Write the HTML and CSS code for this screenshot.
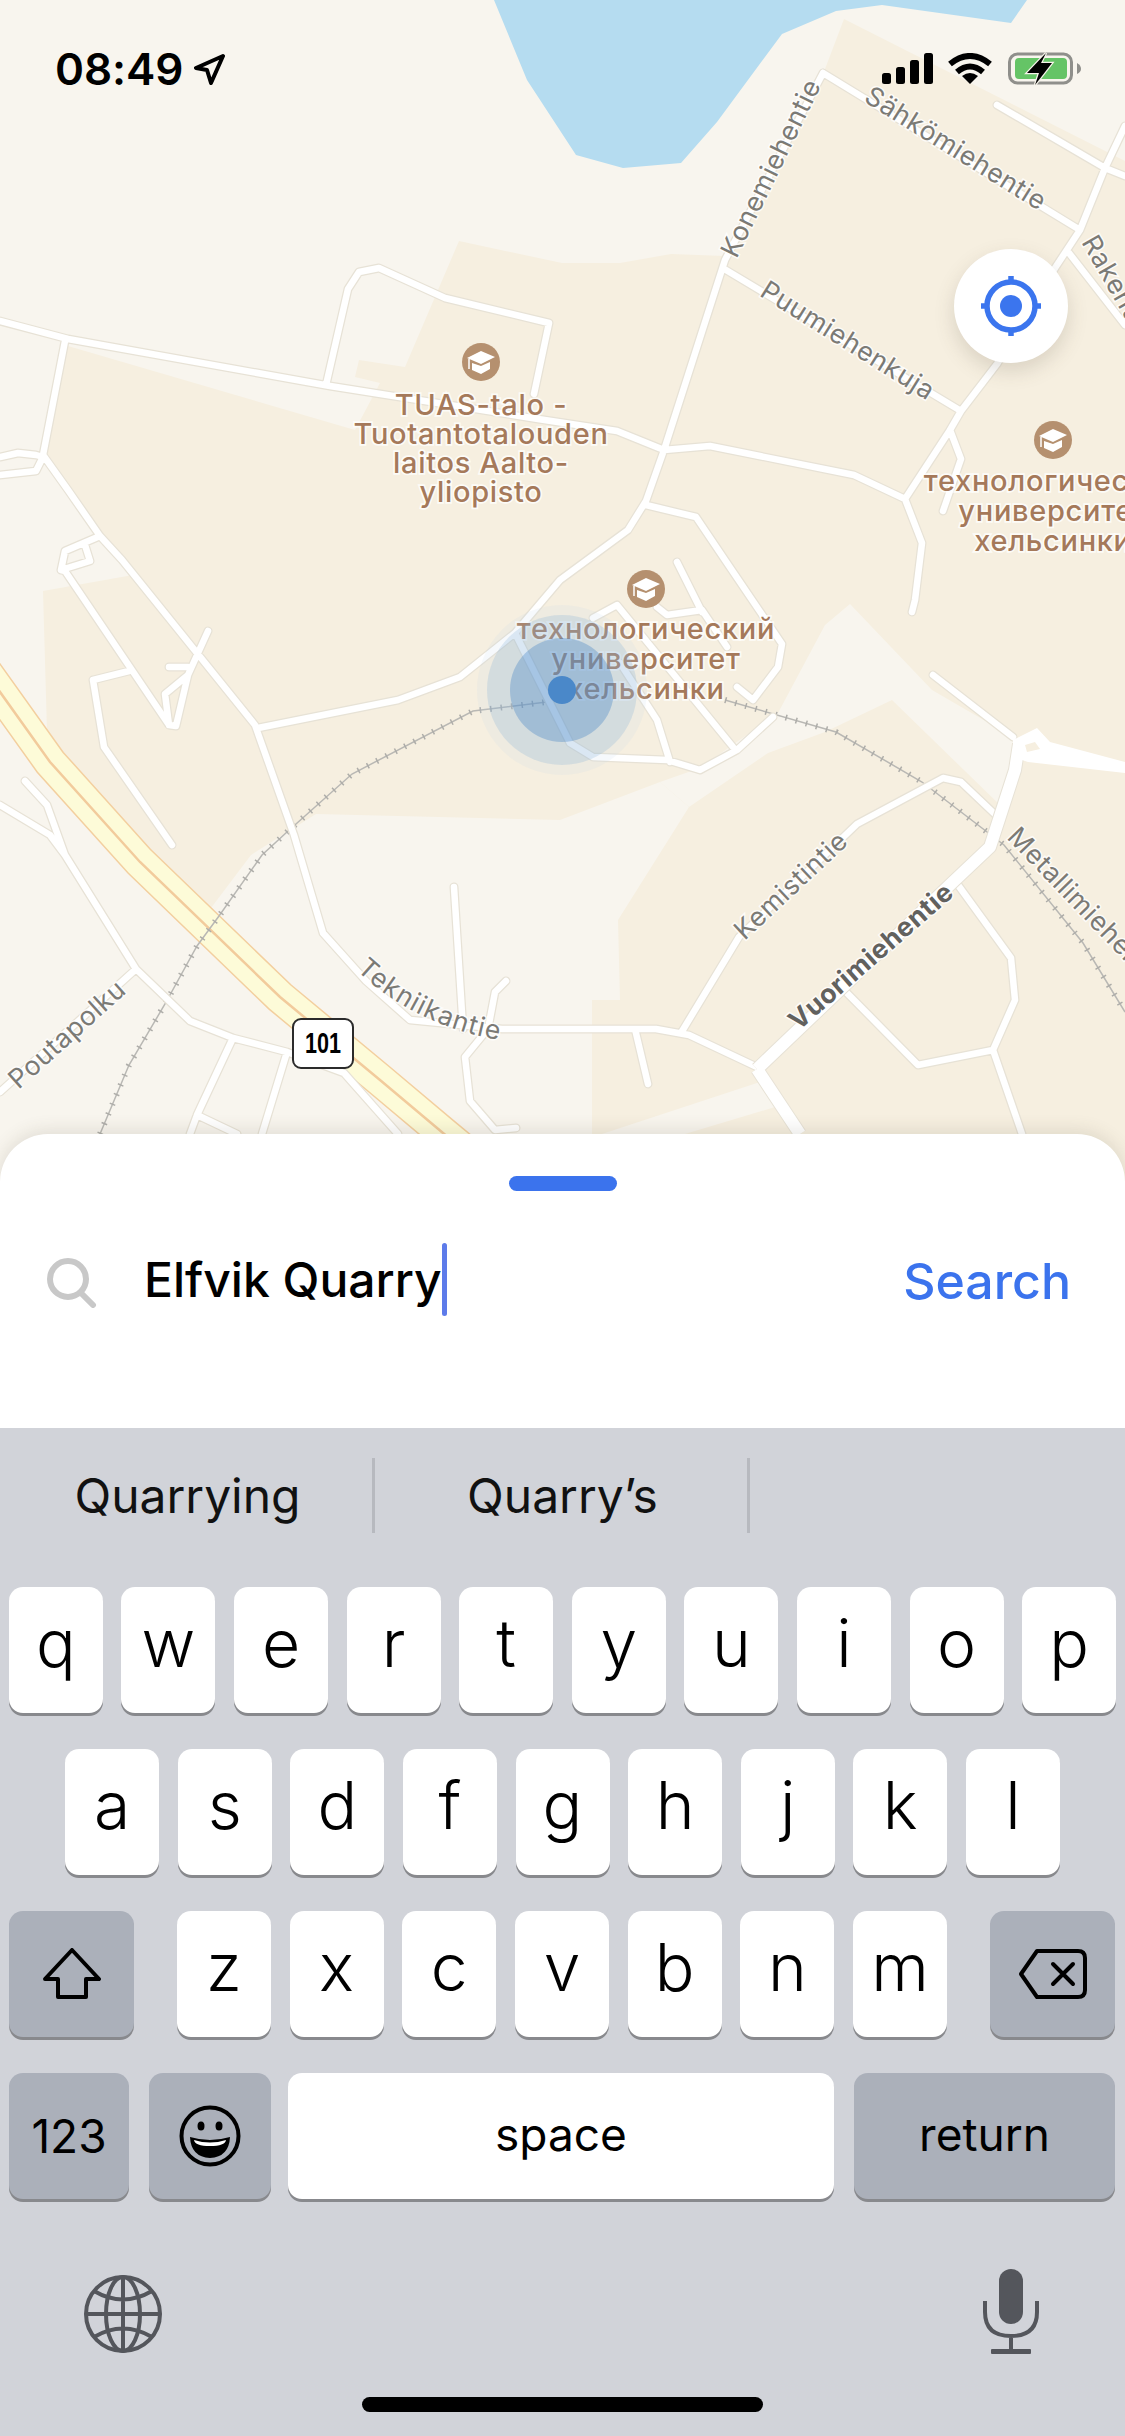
FILE: index.html
```html
<!DOCTYPE html>
<html lang="en">
<head>
<meta charset="utf-8">
<title>Map search</title>
<link rel="stylesheet" href="styles.css">
</head>
<body>
<div class="screen">
  <section class="map">
    <svg class="map-canvas" viewBox="0 0 1125 1182" width="1125" height="1182" aria-hidden="false">
      <defs>
        <path id="roads" d="M0 321L68 339L330 386L538 419L617 431L664 450
          M823 73L725 260L664 450L646 501L628 530L560 580L515 633L460 677L398 700L258 728
          M823 73L1080 230
          M997 105L1105 168L1125 176
          M1125 126L1105 168L1080 230L1055 268L997 364L961 411L950 430L905 499
          M726 270L961 411
          M664 450L710 446L854 475L905 499L922 543L915 600L912 612
          M950 430L961 459L943 511
          M1069 253L1125 325
          M646 505L696 517L725 560L782 644L778 667L753 700L737 687
          M677 562L702 612M657 607L667 615L702 610L727 647
          M593 618L617 605L733 747
          M515 633L570 743L593 757L667 760L700 770L737 750L773 717
          M620 663L657 720L670 762
          M326 385L348 289L359 272L379 268L445 298L549 323L534 394
          M65 341L43 455L68 490L100 536L122 560L255 725L294 835L323 933L366 981L410 1020L502 1029L656 1029L689 1035L757 1067
          M0 457L18 453L36 455L43 457M0 475L36 471L43 457
          M100 536L65 551L61 570L90 561L85 545
          M61 570L65 571L169 725L176 726L188 675L208 631
          M169 725L165 694L188 675M169 667L188 667
          M93 680L129 671M93 680L104 747L172 845
          M0 805L50 835L65 855L136 969L190 1021L233 1038L287 1052L344 1073L398 1134
          M25 781L47 805L65 855
          M136 969L0 1092
          M233 1038L197 1115L190 1134M287 1052L262 1134M197 1115L237 1134
          M454 887L463 1029
          M506 981L495 992L488 1029L465 1057L470 1101L495 1130L516 1128
          M635 1029L648 1084
          M681 1033L739 937L857 824L943 778L961 782L1001 820
          M958 885L1011 958L1015 1000L993 1050L918 1065L846 992
          M993 1050L1022 1134
          M933 675L1013 737"/>
        <symbol id="cap" viewBox="0 0 38 38">
          <circle class="poi-disc" cx="19" cy="19" r="19"/>
          <path class="poi-cap" d="M5 15L19 8L33 14L19 21Z"/>
          <path class="poi-cap" d="M10 20V27L19 31L28 26V19L19 23Z"/>
          <path class="poi-tassel" d="M7 16V26"/>
        </symbol>
        <path id="tekni" d="M356 970Q420 1030 512 1042"/>
      </defs>

      <polygon class="land" points="844,19 1125,161 1125,1182 592,1182 592,1000 620,1000 618,920 689,807 660,782 560,820 316,814 251,855 208,912 50,755 47,732 43,591 133,575 70,490 43,455 68,346 355,430 380,383 355,377 359,360 405,367 459,241 562,263 620,263 671,254 725,256 825,69"/>
      <polygon class="pale" points="850,604 825,625 778,713 700,768 660,782 689,807 768,753 825,732 892,700 1002,807 1013,757 1013,737 932,690"/>
      <polygon class="pale" points="602,1134 760,1082 775,1107 685,1134"/>
      <polygon class="water" points="494,0 527,80 576,155 623,168 681,163 717,122 782,34 836,11 882,5 1011,23 1027,0"/>

      <path class="hw-edge" d="M-15 671L50 762L140 862L280 997L380 1080L443 1133L490 1172"/>
      <path class="hw-fill" d="M-15 671L50 762L140 862L280 997L380 1080L443 1133L490 1172"/>
      <path class="hw-mid" d="M-15 671L50 762L140 862L280 997L380 1080L443 1133L490 1172"/>

      <path class="rail" d="M100 1134L129 1065L165 1004L197 946L219 916L262 855L287 832L352 774L473 711L563 700M725 700L836 732L922 782L1004 845L1083 943L1125 1012"/>
      <path class="rail-ties" d="M100 1134L129 1065L165 1004L197 946L219 916L262 855L287 832L352 774L473 711L563 700M725 700L836 732L922 782L1004 845L1083 943L1125 1012"/>

      <g class="road-case"><use href="#roads"/></g>
      <g class="road-fill"><use href="#roads"/></g>
      <g class="major-case"><path d="M757 1069L954 881L990 847L1015 770L1019 744M757 1069L800 1134"/></g>
      <g class="major-fill"><path d="M757 1069L954 881L990 847L1015 770L1019 744M757 1069L800 1134"/></g>
      <path class="plaza" d="M1013 740L1037 728L1050 742L1125 762V773L1028 762L1013 757Z"/>
      <path class="plaza-island" d="M1025 745L1035 742L1040 749L1027 752Z"/>

      <text class="street" transform="translate(779 172) rotate(-64)">Konemiehentie</text>
      <text class="street" transform="translate(951 156) rotate(32)">Sähkömiehentie</text>
      <text class="street street-start" transform="translate(1081 242) rotate(60)">Rakentajanaukio</text>
      <text class="street" transform="translate(843 348) rotate(32)">Puumiehenkuja</text>
      <text class="street street-start" transform="translate(1006 838) rotate(46)">Metallimiehentie</text>
      <text class="street" transform="translate(797 892) rotate(-43)">Kemistintie</text>
      <text class="street street-bold" transform="translate(877 963) rotate(-41)">Vuorimiehentie</text>
      <text class="street street-start street-wide"><textPath href="#tekni">Tekniikantie</textPath></text>
      <text class="street" transform="translate(73 1041) rotate(-42)">Poutapolku</text>

      <use href="#cap" x="462" y="343" width="38" height="38"/>
      <text class="poi" x="481" y="415">TUAS-talo -</text>
      <text class="poi" x="481" y="444">Tuotantotalouden</text>
      <text class="poi" x="481" y="473">laitos Aalto-</text>
      <text class="poi" x="481" y="502">yliopisto</text>

      <use href="#cap" x="1034" y="421" width="38" height="38"/>
      <text class="poi" x="1053" y="491">технологический</text>
      <text class="poi" x="1053" y="521">университет</text>
      <text class="poi" x="1053" y="551">хельсинки</text>

      <use href="#cap" x="627" y="570" width="38" height="38"/>
      <text class="poi" x="646" y="639">технологический</text>
      <text class="poi" x="646" y="669">университет</text>
      <text class="poi" x="646" y="699">хельсинки</text>

      <circle class="loc-halo" cx="562" cy="690" r="85"/>
      <circle class="loc-outer" cx="562" cy="690" r="75"/>
      <circle class="loc-inner" cx="562" cy="690" r="52"/>
      <circle class="loc-dot" cx="562" cy="690" r="14"/>

      <rect class="shield" x="293" y="1019" width="60" height="49" rx="8"/>
      <text class="shield-text" x="323" y="1053" textLength="36" lengthAdjust="spacingAndGlyphs">101</text>
    </svg>

    <header class="status">
      <div class="status-left">
        <span class="time">08:49</span>
        <svg class="arrow" viewBox="0 0 32 32" width="32" height="32"><path d="M29 3L2 15L13 17L17 30Z"/></svg>
      </div>
      <div class="status-right">
        <svg class="signal" viewBox="0 0 51 32" width="51" height="32">
          <rect x="0" y="20" width="9" height="11" rx="2.5"/>
          <rect x="14" y="14" width="9" height="17" rx="2.5"/>
          <rect x="28" y="7" width="9" height="24" rx="2.5"/>
          <rect x="42" y="0" width="9" height="31" rx="2.5"/>
        </svg>
        <svg class="wifi" viewBox="0 0 46 32" width="46" height="32">
          <path class="wifi-arc" d="M3 11Q23 -5 43 11"/>
          <path class="wifi-arc" d="M10 19Q23 8 36 19"/>
          <path class="wifi-dot" d="M23 31L15 23Q23 17 31 23Z"/>
        </svg>
        <svg class="battery" viewBox="0 0 74 34" width="74" height="34">
          <rect class="batt-shell" x="1.5" y="2" width="62" height="29" rx="8"/>
          <rect class="batt-level" x="7" y="6" width="52" height="21" rx="4"/>
          <path class="batt-cap" d="M69 11Q73 13 73 17Q73 20 69 22Z"/>
          <path class="batt-bolt" d="M38 1L19 21H31L27 33L44 11H33Z"/>
        </svg>
      </div>
    </header>

    <button class="locate" type="button" aria-label="Locate">
      <svg viewBox="0 0 60 60" width="60" height="60">
        <circle class="locate-ring" cx="30" cy="30" r="24"/>
        <circle class="locate-core" cx="30" cy="30" r="11"/>
        <path class="locate-tick" d="M30 0V8M30 52V60M0 30H8M52 30H60"/>
      </svg>
    </button>
  </section>

  <section class="sheet">
    <div class="handle"></div>
    <div class="search-row">
      <svg class="search-icon" viewBox="0 0 50 50" width="50" height="50">
        <circle cx="21" cy="21" r="18"/>
        <path d="M34 35L46 47"/>
      </svg>
      <div class="query"><span>Elfvik Quarry</span><i class="caret"></i></div>
      <div class="search-action">Search</div>
    </div>
  </section>

  <section class="keyboard">
    <div class="suggestions">
      <div class="suggestion">Quarrying</div>
      <div class="suggestion">Quarry’s</div>
      <div class="suggestion"></div>
    </div>
    <div class="row row-1">
      <div class="key">q</div><div class="key">w</div><div class="key">e</div><div class="key">r</div><div class="key">t</div><div class="key">y</div><div class="key">u</div><div class="key">i</div><div class="key">o</div><div class="key">p</div>
    </div>
    <div class="row row-2">
      <div class="key">a</div><div class="key">s</div><div class="key">d</div><div class="key">f</div><div class="key">g</div><div class="key">h</div><div class="key">j</div><div class="key">k</div><div class="key">l</div>
    </div>
    <div class="row row-3">
      <div class="key key-fn key-shift">
        <svg viewBox="0 0 60 52" width="60" height="52"><path d="M30 2L57 31H44V49H16V31H3Z"/></svg>
      </div>
      <div class="letters">
        <div class="key">z</div><div class="key">x</div><div class="key">c</div><div class="key">v</div><div class="key">b</div><div class="key">n</div><div class="key">m</div>
      </div>
      <div class="key key-fn key-shift">
        <svg viewBox="0 0 68 50" width="68" height="50"><path d="M18 2H59Q66 2 66 9V41Q66 48 59 48H18L2 25Z"/><path d="M34 15L54 35M54 15L34 35"/></svg>
      </div>
    </div>
    <div class="row row-4">
      <div class="key key-fn key-small key-num">123</div>
      <div class="key key-fn key-emoji">
        <svg viewBox="0 0 62 62" width="62" height="62">
          <circle class="face" cx="31" cy="31" r="28.5"/>
          <ellipse class="eye" cx="22" cy="21" rx="3.5" ry="4.5"/>
          <ellipse class="eye" cx="40" cy="21" rx="3.5" ry="4.5"/>
          <path class="mouth" d="M11 32Q31 38 51 32Q50 52 31 53Q12 52 11 32Z"/>
          <path class="teeth" d="M15 35Q31 40 47 35Q46 41 31 41Q16 41 15 35Z"/>
        </svg>
      </div>
      <div class="key key-small key-space">space</div>
      <div class="key key-fn key-small key-return">return</div>
    </div>
    <div class="tools">
      <svg class="globe" viewBox="0 0 80 80" width="80" height="80">
        <circle cx="40" cy="40" r="37"/>
        <ellipse cx="40" cy="40" rx="17" ry="37"/>
        <path d="M40 3V77M3 40H77M11 17Q40 34 69 17M11 63Q40 46 69 63"/>
      </svg>
      <svg class="mic" viewBox="0 0 56 86" width="56" height="86">
        <rect class="mic-body" x="16" y="1" width="24" height="55" rx="12"/>
        <path class="mic-line" d="M2 33V44Q2 68 28 68Q54 68 54 44V33M28 68V83"/>
        <rect class="mic-body" x="8" y="81" width="40" height="5" rx="1"/>
      </svg>
    </div>
    <div class="home-indicator"></div>
  </section>
</div>
</body>
</html>
```
FILE: styles.css
```css
* { box-sizing: border-box; }
html, body { margin: 0; padding: 0; }
body { width: 1125px; height: 2436px; overflow: hidden; font-family: "Inter", "Liberation Sans", sans-serif; background: #d1d3d9; }
.screen { width: 1125px; height: 2436px; display: flex; flex-direction: column; overflow: hidden; }

/* Map */
.map { position: relative; height: 1182px; flex: none; background: #f8f5ee; overflow: hidden; }
.map-canvas { position: absolute; left: 0; top: 0; display: block; }
.land { fill: #f6efe0; }
.pale { fill: #f8f5ee; }
.water { fill: #b5dcf0; }
.hw-edge { fill: none; stroke: #f3cf9f; stroke-width: 34; }
.hw-fill { fill: none; stroke: #fdfbd8; stroke-width: 31; }
.hw-mid { fill: none; stroke: #f2cb9c; stroke-width: 2.5; }
.rail { fill: none; stroke: #b9b8b4; stroke-width: 1.5; }
.rail-ties { fill: none; stroke: #aeada9; stroke-width: 6; stroke-dasharray: 1.5 9; }
.road-case { fill: none; stroke: #e7e2d6; stroke-width: 9; stroke-linecap: round; stroke-linejoin: round; }
.road-fill { fill: none; stroke: #ffffff; stroke-width: 6.5; stroke-linecap: round; stroke-linejoin: round; }
.major-case { fill: none; stroke: #e7e2d6; stroke-width: 14; stroke-linejoin: round; }
.major-fill { fill: none; stroke: #ffffff; stroke-width: 12; stroke-linejoin: round; }
.plaza { fill: #ffffff; }
.plaza-island { fill: #f6efe0; }
.street { font-family: "Inter", "Liberation Sans", sans-serif; font-size: 26.5px; fill: #7b7a75; text-anchor: middle; stroke: rgba(255,255,255,.8); stroke-width: 3px; paint-order: stroke; letter-spacing: .6px; }
.street-start { text-anchor: start; }
.street-wide { letter-spacing: 1.1px; }
.street-bold { font-weight: 700; font-size: 26.5px; fill: #62615e; }
.poi { font-family: "Inter", "Liberation Sans", sans-serif; font-size: 29px; font-weight: 500; fill: #a5795a; text-anchor: middle; stroke: rgba(255,255,255,.75); stroke-width: 3.5px; paint-order: stroke; letter-spacing: .7px; }
.poi-disc { fill: #b5906f; }
.poi-cap { fill: #ffffff; }
.poi-tassel { fill: none; stroke: #ffffff; stroke-width: 1.5; }
.loc-halo { fill: rgba(190,215,235,.14); }
.loc-outer { fill: rgba(120,170,215,.22); }
.loc-inner { fill: rgba(55,125,195,.32); }
.loc-dot { fill: #4a88c9; }
.shield { fill: #ffffff; stroke: #2b2b2b; stroke-width: 2; }
.shield-text { font-family: "Liberation Sans", sans-serif; font-size: 29px; font-weight: 700; text-anchor: middle; fill: #000000; }

/* Status bar */
.status { position: relative; display: flex; justify-content: space-between; align-items: flex-start; padding: 52px 43px 0 55px; }
.status-left { display: flex; align-items: center; gap: 11px; }
.time { font-size: 44px; font-weight: 600; line-height: 34px; color: #000; letter-spacing: -.1px; }
.arrow { fill: none; stroke: #000; stroke-width: 4; stroke-linejoin: round; }
.status-right { display: flex; align-items: flex-start; gap: 15px; }
.signal { fill: #000; margin-top: 1px; margin-right: -1px; }
.wifi { margin-top: 1px; }
.wifi-arc { fill: none; stroke: #000; stroke-width: 6; }
.wifi-dot { fill: #000; }
.batt-shell { fill: none; stroke: #8f8f8b; stroke-width: 3; }
.batt-level { fill: #65c466; }
.batt-cap { fill: #8f8f8b; }
.batt-bolt { fill: #000; stroke: #f6f3ea; stroke-width: 2.5; paint-order: stroke; }

/* Locate */
.locate { position: absolute; left: 954px; top: 249px; width: 114px; height: 114px; padding: 0; border: 0; border-radius: 50%; background: #fff; box-shadow: 0 8px 20px rgba(90,80,60,.18); display: flex; align-items: center; justify-content: center; }
.locate-ring { fill: none; stroke: #3b75ee; stroke-width: 5.5; }
.locate-core { fill: #3b75ee; }
.locate-tick { fill: none; stroke: #3b75ee; stroke-width: 5.5; }

/* Sheet */
.sheet { position: relative; height: 294px; flex: none; margin-top: -48px; background: #fff; border-radius: 48px 48px 0 0; box-shadow: 0 -3px 18px rgba(80,70,50,.14); padding-top: 42px; }
.handle { width: 108px; height: 15px; margin: 0 auto; border-radius: 8px; background: #3b73ed; }
.search-row { display: flex; align-items: center; height: 74px; margin-top: 51px; padding: 0 54px 0 47px; }
.search-icon { flex: none; fill: none; stroke: #c8c8c8; stroke-width: 6; stroke-linecap: round; margin-top: 8px; }
.query { flex: 1; display: flex; align-items: center; margin-left: 47px; height: 74px; font-size: 48px; font-weight: 500; color: #000; }
.query span { letter-spacing: 0; }
.caret { display: block; flex: none; width: 5px; height: 73px; margin-left: 0; border-radius: 3px; background: #5d7bea; }
.search-action { font-size: 50px; color: #3b73ed; font-weight: 500; padding-top: 4px; }

/* Keyboard */
.keyboard { flex: 1; background: #d1d3d9; position: relative; display: flex; flex-direction: column; }
.suggestions { display: grid; grid-template-columns: 375px 375px 375px; height: 159px; padding-top: 30px; align-items: start; }
.suggestion { height: 75px; display: flex; align-items: center; justify-content: center; padding-left: 3px; font-size: 48px; color: #111; border-right: 3px solid #b7b9bf; font-weight: 400; }
.suggestion:last-child { border-right: 0; }
.row { display: flex; justify-content: center; gap: 18.6px; height: 126px; margin-bottom: 36px; }
.row-3 { justify-content: space-between; padding: 0 10px 0 9px; }
.letters { display: flex; gap: 18.7px; }
.row-4 { justify-content: flex-start; padding-left: 9px; gap: 20px; }
.key { flex: none; width: 94px; height: 126px; border-radius: 14px; background: #fff; box-shadow: 0 3px 0 #88898d; display: flex; align-items: center; justify-content: center; padding-bottom: 14px; font-size: 66px; font-weight: 300; color: #000; }
.key-fn { background: #abb0ba; }
.key-shift { width: 125px; padding-bottom: 0; }
.key-shift svg { fill: none; stroke: #000; stroke-width: 4; stroke-linejoin: round; stroke-linecap: round; }
.key-small { font-size: 46px; padding-bottom: 4px; font-weight: 400; }
.key-num { width: 120px; padding-bottom: 0; }
.key-emoji { width: 122px; padding-bottom: 0; margin-right: -3px; }
.key-space { width: 546px; }
.key-return { width: 261px; }
.face { fill: none; stroke: #000; stroke-width: 4; }
.eye { fill: #000; }
.mouth { fill: #000; }
.teeth { fill: #fff; }
.tools { display: flex; justify-content: space-between; align-items: flex-end; padding: 0 86px 0 83px; margin-top: 33px; height: 86px; }
.globe { fill: none; stroke: #54565c; stroke-width: 4; }
.mic-body { fill: #54565c; }
.mic-line { fill: none; stroke: #54565c; stroke-width: 4; }
.home-indicator { width: 401px; height: 15px; margin: 43px auto 0; border-radius: 8px; background: #000; }
```
